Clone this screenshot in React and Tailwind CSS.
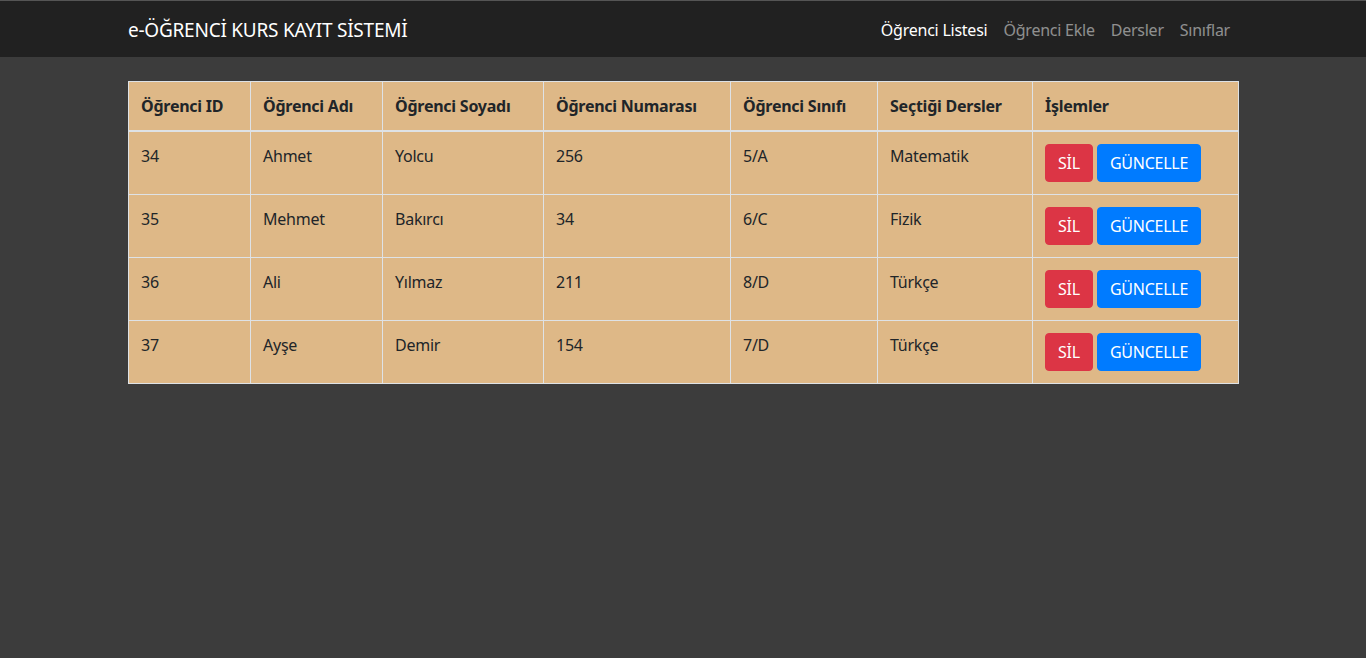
import React from 'react';

const ogrenciler = [
    { id: 34, ad: 'Ahmet', soyad: 'Yolcu', numara: 256, sinif: '5/A', ders: 'Matematik' },
    { id: 35, ad: 'Mehmet', soyad: 'Bakırcı', numara: 34, sinif: '6/C', ders: 'Fizik' },
    { id: 36, ad: 'Ali', soyad: 'Yılmaz', numara: 211, sinif: '8/D', ders: 'Türkçe' },
    { id: 37, ad: 'Ayşe', soyad: 'Demir', numara: 154, sinif: '7/D', ders: 'Türkçe' },
];

const basliklar = [
    { label: 'Öğrenci ID', w: 'w-[122px]' },
    { label: 'Öğrenci Adı', w: 'w-[132px]' },
    { label: 'Öğrenci Soyadı', w: 'w-[161px]' },
    { label: 'Öğrenci Numarası', w: 'w-[187px]' },
    { label: 'Öğrenci Sınıfı', w: 'w-[147px]' },
    { label: 'Seçtiği Dersler', w: 'w-[155px]' },
    { label: 'İşlemler', w: 'w-[206px]' },
];

const App = () => {
    return (
        <div className="min-h-screen bg-[#3c3c3c] text-[16px] leading-6 text-[#212529] tracking-[-0.015em]" style={{ fontFamily: '"Noto Sans", "Open Sans", sans-serif' }}>
            {/* NAVBAR */}
            <nav className="bg-[#212121] border-t border-[#555]">
                <div className="mx-auto w-[1110px] h-[56px] flex items-center justify-between">
                    <a className="text-white text-[19px] leading-[30px] pt-0.5">e-ÖĞRENCİ KURS KAYIT SİSTEMİ</a>
                    <ul className="flex pt-0.5">
                        <li className="px-2 text-white">Öğrenci Listesi</li>
                        <li className="px-2 text-white/50">Öğrenci Ekle</li>
                        <li className="px-2 text-white/50">Dersler</li>
                        <li className="px-2 text-white/50">Sınıflar</li>
                    </ul>
                </div>
            </nav>

            <div className="mx-auto w-[1110px] pt-6">
                <table className="w-full table-fixed border-collapse bg-[#deb887]">
                    <thead>
                        <tr>
                            {basliklar.map((b) => (
                                <th key={b.label} className={`${b.w} border border-[#dee2e6] border-b-2 p-3 text-left font-bold align-bottom`}>{b.label}</th>
                            ))}
                        </tr>
                    </thead>
                    <tbody>
                        {ogrenciler.map((o) => (
                            <tr key={o.id}>
                                <td className="border border-[#dee2e6] p-3 align-top">{o.id}</td>
                                <td className="border border-[#dee2e6] p-3 align-top">{o.ad}</td>
                                <td className="border border-[#dee2e6] p-3 align-top">{o.soyad}</td>
                                <td className="border border-[#dee2e6] p-3 align-top">{o.numara}</td>
                                <td className="border border-[#dee2e6] p-3 align-top">{o.sinif}</td>
                                <td className="border border-[#dee2e6] p-3 align-top">{o.ders}</td>
                                <td className="border border-[#dee2e6] p-3 align-top">
                                    <div className="flex gap-1">
                                        <button className="bg-[#dc3545] border border-[#dc3545] text-white px-3 py-1.5 rounded">SİL</button>
                                        <button className="bg-[#007bff] border border-[#007bff] text-white px-3 py-1.5 rounded">GÜNCELLE</button>
                                    </div>
                                </td>
                            </tr>
                        ))}
                    </tbody>
                </table>
            </div>
        </div>
    );
};

export default App;
